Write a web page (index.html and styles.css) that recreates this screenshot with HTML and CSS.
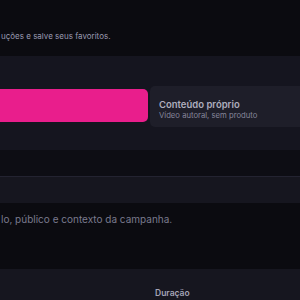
FILE: index.html
```html
<!DOCTYPE html>
<html>
<head>
    <link rel="stylesheet" href="styles.css">
  </head>
  <body>
    <div class="page">
      <p class="intro">uções e salve seus favoritos.</p>

      <div class="panel">
        <div class="options">
          <div class="option option-active"></div>
          <div class="option">
            <span class="option-title">Conteúdo próprio</span>
            <span class="option-sub">Vídeo autoral, sem produto</span>
          </div>
        </div>
      </div>

      <div class="field-gap"></div>
      <div class="field"></div>

      <p class="hint">lo, público e contexto da campanha.</p>

      <div class="footer">
        <span class="footer-label">Duração</span>
      </div>
    </div>
  </body>
</html>
```

FILE: styles.css
```css
body {
    margin: 0;
    background-color: #0b0b10;
    font-family: Inter, "Noto Sans", sans-serif;
    overflow: hidden;
  }

  .page {
    width: 300px;
    height: 300px;
    display: flex;
    flex-direction: column;
  }

  .intro {
    margin: 0;
    height: 57px;
    box-sizing: border-box;
    padding: 31px 0 0 1px;
    font-size: 8px;
    color: #9a9ab0;
  }

  .panel {
    height: 96px;
    box-sizing: border-box;
    padding-top: 30px;
    background-color: #15151f;
  }

  .options {
    display: flex;
    align-items: flex-start;
    gap: 2px;
  }

  .option {
    flex: 1;
    height: 41px;
    box-sizing: border-box;
    padding: 13px 0 0 9px;
    display: flex;
    flex-direction: column;
    gap: 1px;
    background-color: #1e1e29;
    border-radius: 5px 0 0 5px;
  }

  .option-active {
    flex: 0 0 148px;
    height: 33px;
    margin-top: 3px;
    padding: 0;
    background-color: #e91e8c;
    border-radius: 0 5px 5px 0;
  }

  .option-title {
    font-size: 9.5px;
    font-weight: 600;
    color: #aeaebe;
  }

  .option-sub {
    font-size: 7.7px;
    color: #85859a;
  }

  .field-gap {
    height: 26px;
    background-color: #0d0d14;
  }

  .field {
    height: 28px;
    background-color: #16161f;
    border-top: 1px solid #232331;
    box-sizing: border-box;
  }

  .hint {
    margin: 0;
    height: 68px;
    box-sizing: border-box;
    padding: 10px 0 0 1px;
    font-size: 10px;
    color: #7a7a8e;
  }

  .footer {
    flex: 1;
    background-color: #16161f;
    padding: 11px 0 0 155px;
  }

  .footer-label {
    font-size: 8.5px;
    font-weight: 600;
    color: #a4a4b6;
  }
```
